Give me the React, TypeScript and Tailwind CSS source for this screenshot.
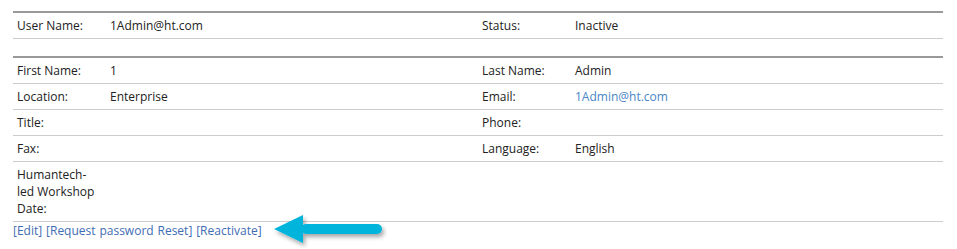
import React from "react";

const Label = ({ children }: { children?: React.ReactNode }) => (
  <td className="w-[10%] px-[4px] py-[4px] align-top text-[#222]">{children}</td>
);
const Value = ({ children, link }: { children?: React.ReactNode; link?: boolean }) => (
  <td className={`w-[40%] px-[4px] py-[4px] align-top ${link ? "text-[#4a86c5]" : "text-[#222]"}`}>{children}</td>
);

export default function App() {
  return (
    <div
      className="w-[957px] h-[249px] bg-white pt-[11px] px-[13px] text-[12px] leading-[17px]"
      style={{ fontFamily: '"Open Sans", "Noto Sans", sans-serif' }}
    >
      <div className="w-[930px]">
        <table className="w-full table-fixed border-collapse border-t-2 border-[#999]">
          <tbody>
            <tr className="border-b border-[#ccc]">
              <Label>User Name:</Label>
              <Value>1Admin@ht.com</Value>
              <Label>Status:</Label>
              <Value>Inactive</Value>
            </tr>
          </tbody>
        </table>
        <div className="h-[17px]" />
        <table className="w-full table-fixed border-collapse border-t-2 border-[#999]">
          <tbody>
            <tr className="border-b border-[#ccc]">
              <Label>First Name:</Label>
              <Value>1</Value>
              <Label>Last Name:</Label>
              <Value>Admin</Value>
            </tr>
            <tr className="border-b border-[#ccc]">
              <Label>Location:</Label>
              <Value>Enterprise</Value>
              <Label>Email:</Label>
              <Value link>1Admin@ht.com</Value>
            </tr>
            <tr className="border-b border-[#ccc]">
              <Label>Title:</Label>
              <Value></Value>
              <Label>Phone:</Label>
              <Value></Value>
            </tr>
            <tr className="border-b border-[#ccc]">
              <Label>Fax:</Label>
              <Value></Value>
              <Label>Language:</Label>
              <Value>English</Value>
            </tr>
            <tr className="border-b border-[#ccc]">
              <Label>Humantech-led Workshop Date:</Label>
              <Value></Value>
              <Label></Label>
              <Value></Value>
            </tr>
          </tbody>
        </table>
        <div className="flex items-center h-[17px]">
          <div className="text-[#3f6db3] whitespace-nowrap [word-spacing:0.75px]">
            <a>[Edit]</a> <a>[Request password Reset]</a> <a>[Reactivate]</a>
          </div>
          <svg width="120" height="40" viewBox="0 0 120 40" className="ml-[11px] mt-[4px] overflow-visible">
            <defs>
              <filter id="sh" x="-20%" y="-40%" width="150%" height="200%">
                <feDropShadow dx="2" dy="3" stdDeviation="2" floodColor="#000" floodOpacity="0.35" />
              </filter>
            </defs>
            <g filter="url(#sh)">
              <path d="M1 16 L30 2 L30 30 Z" fill="#00b4dc" />
              <rect x="28" y="11" width="81" height="10" rx="5" fill="#00b4dc" />
            </g>
          </svg>
        </div>
      </div>
    </div>
  );
}
